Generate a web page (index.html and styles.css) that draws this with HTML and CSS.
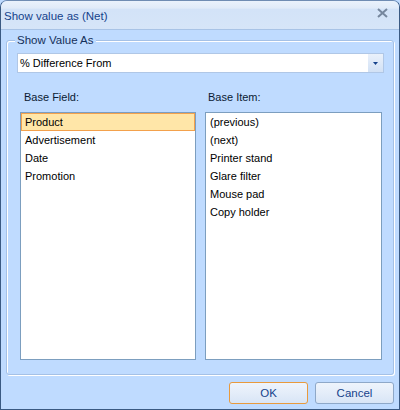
FILE: index.html
```html
<!DOCTYPE html>
<html>
<head>
<meta charset="utf-8">
<link rel="stylesheet" href="styles.css">
</head>
<body>
<div class="window">
  <div class="titlebar">
    <span class="title">Show value as (Net)</span>
    <svg class="close" width="11" height="10" viewBox="0 0 11 10">
      <path d="M1 1 L10 9 M10 1 L1 9" stroke="#76879e" stroke-width="2" fill="none"/>
    </svg>
  </div>
  <div class="body">
    <fieldset class="group">
      <legend>Show Value As</legend>
      <div class="combo">
        <span class="combo-text">% Difference From</span>
        <span class="combo-btn">
          <svg width="5" height="3" viewBox="0 0 5 3"><path d="M0 0 H5 L2.5 3 Z" fill="#15428b"/></svg>
        </span>
      </div>
      <div class="columns">
        <div class="col">
          <div class="label">Base Field:</div>
          <div class="list">
            <div class="item selected">Product</div>
            <div class="item">Advertisement</div>
            <div class="item">Date</div>
            <div class="item">Promotion</div>
          </div>
        </div>
        <div class="col">
          <div class="label right">Base Item:</div>
          <div class="list">
            <div class="item">(previous)</div>
            <div class="item">(next)</div>
            <div class="item">Printer stand</div>
            <div class="item">Glare filter</div>
            <div class="item">Mouse pad</div>
            <div class="item">Copy holder</div>
          </div>
        </div>
      </div>
    </fieldset>
    <div class="buttons">
      <div class="btn default">OK</div>
      <div class="btn">Cancel</div>
    </div>
  </div>
</div>
</body>
</html>
```

FILE: styles.css
```css
html, body {
  margin: 0;
  padding: 0;
}
body {
  width: 400px;
  height: 410px;
  font-family: "Liberation Sans", Arial, sans-serif;
  font-size: 11px;
  color: #000;
  background: #bfdbff;
}
.window {
  box-sizing: border-box;
  width: 400px;
  height: 410px;
  border: 1px solid #3a5a83;
  border-top-color: #6f8cb3;
  border-radius: 7px 7px 0 0;
  background: #bfdbff;
  display: flex;
  flex-direction: column;
  overflow: hidden;
}
.titlebar {
  height: 28px;
  border-bottom: 1px solid #a8c3e6;
  background: linear-gradient(#eaf2fc 0%, #e0ebf9 25%, #d3e3f8 30%, #d6e5f8 100%);
  display: flex;
  align-items: center;
  justify-content: space-between;
  padding: 0 11px 0 3px;
  color: #15428b;
  font-size: 11.5px;
}
.title {
  padding-top: 2px;
}
.close {
  display: block;
  margin-top: -4px;
}
.body {
  flex: 1;
  display: flex;
  flex-direction: column;
  padding: 3px 5px 5px 5px;
}
.group {
  margin: 0;
  border: 1px solid #a5c1e6;
  border-radius: 3px;
  box-shadow: 1px 1px 0 #fff, inset 1px 1px 0 #fff;
  padding: 6px 9px 14px 10px;
  min-width: 0;
}
.group legend {
  line-height: 14px;
  padding: 0 2px;
  margin-left: -2px;
  color: #15305a;
  font-size: 11.5px;
  background: #bfdbff;
}
.combo {
  height: 20px;
  box-sizing: border-box;
  border: 1px solid #b0c7e6;
  background: #fff;
  display: flex;
  align-items: stretch;
}
.combo-text {
  flex: 1;
  padding-left: 2px;
  line-height: 18px;
}
.combo-btn {
  width: 15px;
  background: linear-gradient(#eaf1fb, #d2e1f5);
  display: flex;
  align-items: center;
  justify-content: center;
}
.combo-btn svg {
  display: block;
}
.columns {
  display: grid;
  grid-template-columns: 176px 177px;
  column-gap: 9px;
  padding: 0 2px 0 3px;
  margin-top: 17px;
}
.label {
  line-height: 14px;
  height: 14px;
  padding-left: 4px;
  margin-bottom: 8px;
  color: #0a1a33;
}
.label.right {
  padding-left: 3px;
}
.list {
  box-sizing: border-box;
  height: 248px;
  border: 1px solid #7c9ebf;
  background: #fff;
}
.item {
  border: 1px solid transparent;
  line-height: 16px;
  padding-left: 3px;
}
.item.selected {
  background: #ffe6a8;
  border-color: #f3a14c;
}
.buttons {
  display: flex;
  justify-content: flex-end;
  gap: 7px;
  margin-top: 7px;
}
.btn {
  box-sizing: border-box;
  width: 79px;
  height: 22px;
  border: 1px solid #8ea8c8;
  border-radius: 3px;
  background: linear-gradient(#eef4fc 0%, #e4edf9 50%, #d8e5f6 100%);
  color: #15428b;
  text-align: center;
  line-height: 20px;
  font-size: 11.5px;
}
.btn.default {
  border-color: #e99a3c;
}
```
